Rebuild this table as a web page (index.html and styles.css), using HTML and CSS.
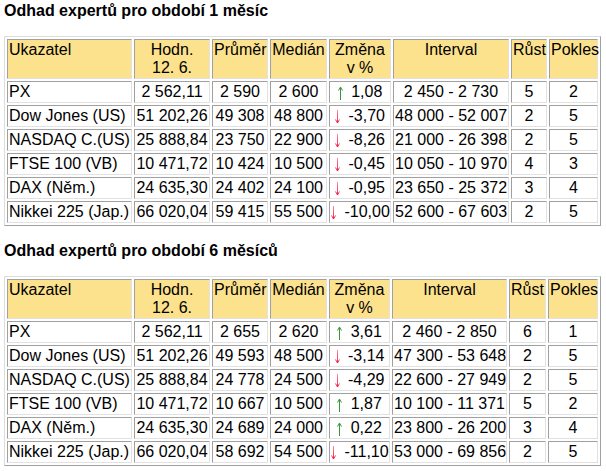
FILE: index.html
```html
<!DOCTYPE html>
<html lang="cs">
<head>
<meta charset="utf-8">
<title>Odhad expertů</title>
<link rel="stylesheet" href="styles.css">
</head>
<body>
<svg class="defs" width="0" height="0" aria-hidden="true">
  <defs>
    <symbol id="up" viewBox="0 0 9 14">
      <path d="M2.5 1.5 V14 M0.5 4.5 L2.5 1 L4.5 4.5" fill="none" stroke="#3a963a" stroke-width="1"/>
    </symbol>
    <linearGradient id="redgrad" x1="0" y1="0" x2="0" y2="1">
      <stop offset="0" stop-color="#ff8aa8"/>
      <stop offset="1" stop-color="#f01e4a"/>
    </linearGradient>
    <symbol id="down" viewBox="0 0 9 14">
      <path d="M2.5 0 V12.5 M0.5 9.5 L2.5 13 L4.5 9.5" fill="none" stroke="url(#redgrad)" stroke-width="1"/>
    </symbol>
  </defs>
</svg>

<h2 class="title">Odhad expertů pro období 1 měsíc</h2>
<table class="grid">
  <tr>
    <th class="name c1">Ukazatel</th>
    <th class="c2">Hodn.<br>12. 6.</th>
    <th class="c3">Průměr</th>
    <th class="c4">Medián</th>
    <th class="c5">Změna<br>v %</th>
    <th class="c6">Interval</th>
    <th class="c7">Růst</th>
    <th class="c8">Pokles</th>
  </tr>
  <tr><td class="name">PX</td><td>2 562,11</td><td>2 590</td><td>2 600</td><td><svg class="arrow"><use href="#up"/></svg> 1,08</td><td>2 450 - 2 730</td><td>5</td><td>2</td></tr>
  <tr><td class="name">Dow Jones (US)</td><td>51 202,26</td><td>49 308</td><td>48 800</td><td><svg class="arrow"><use href="#down"/></svg> -3,70</td><td>48 000 - 52 007</td><td>2</td><td>5</td></tr>
  <tr><td class="name">NASDAQ C.(US)</td><td>25 888,84</td><td>23 750</td><td>22 900</td><td><svg class="arrow"><use href="#down"/></svg> -8,26</td><td>21 000 - 26 398</td><td>2</td><td>5</td></tr>
  <tr><td class="name">FTSE 100 (VB)</td><td>10 471,72</td><td>10 424</td><td>10 500</td><td><svg class="arrow"><use href="#down"/></svg> -0,45</td><td>10 050 - 10 970</td><td>4</td><td>3</td></tr>
  <tr><td class="name">DAX (Něm.)</td><td>24 635,30</td><td>24 402</td><td>24 100</td><td><svg class="arrow"><use href="#down"/></svg> -0,95</td><td>23 650 - 25 372</td><td>3</td><td>4</td></tr>
  <tr><td class="name">Nikkei 225 (Jap.)</td><td>66 020,04</td><td>59 415</td><td>55 500</td><td><svg class="arrow"><use href="#down"/></svg> -10,00</td><td>52 600 - 67 603</td><td>2</td><td>5</td></tr>
</table>

<h2 class="title">Odhad expertů pro období 6 měsíců</h2>
<table class="grid grid-b">
  <tr>
    <th class="name c1">Ukazatel</th>
    <th class="c2">Hodn.<br>12. 6.</th>
    <th class="c3">Průměr</th>
    <th class="c4">Medián</th>
    <th class="c5">Změna<br>v %</th>
    <th class="c6">Interval</th>
    <th class="c7">Růst</th>
    <th class="c8">Pokles</th>
  </tr>
  <tr><td class="name">PX</td><td>2 562,11</td><td>2 655</td><td>2 620</td><td><svg class="arrow"><use href="#up"/></svg> 3,61</td><td>2 460 - 2 850</td><td>6</td><td>1</td></tr>
  <tr><td class="name">Dow Jones (US)</td><td>51 202,26</td><td>49 593</td><td>48 500</td><td><svg class="arrow"><use href="#down"/></svg> -3,14</td><td>47 300 - 53 648</td><td>2</td><td>5</td></tr>
  <tr><td class="name">NASDAQ C.(US)</td><td>25 888,84</td><td>24 778</td><td>24 500</td><td><svg class="arrow"><use href="#down"/></svg> -4,29</td><td>22 600 - 27 949</td><td>2</td><td>5</td></tr>
  <tr><td class="name">FTSE 100 (VB)</td><td>10 471,72</td><td>10 667</td><td>10 500</td><td><svg class="arrow"><use href="#up"/></svg> 1,87</td><td>10 100 - 11 371</td><td>5</td><td>2</td></tr>
  <tr><td class="name">DAX (Něm.)</td><td>24 635,30</td><td>24 689</td><td>24 000</td><td><svg class="arrow"><use href="#up"/></svg> 0,22</td><td>23 800 - 26 200</td><td>3</td><td>4</td></tr>
  <tr><td class="name">Nikkei 225 (Jap.)</td><td>66 020,04</td><td>58 692</td><td>54 500</td><td><svg class="arrow"><use href="#down"/></svg> -11,10</td><td>53 000 - 69 856</td><td>2</td><td>5</td></tr>
</table>
</body>
</html>
```
FILE: styles.css
```css
body {
  margin: 2px 4px 0;
  font-family: "Liberation Sans", Arial, sans-serif;
  font-size: 16px;
  color: #000;
  background: #fff;
}

.defs {
  position: absolute;
  width: 0;
  height: 0;
  overflow: hidden;
}

.title {
  margin: 0 0 16px;
  font-size: 16px;
  font-weight: bold;
  line-height: 18px;
}

.grid {
  table-layout: fixed;
  width: 597px;
  border-collapse: separate;
  border-spacing: 2px;
  border: 1px solid;
  border-color: #dcdcdc #a0a0a0 #a0a0a0 #dcdcdc;
  margin: 0 0 16px;
}

.grid th,
.grid td {
  box-sizing: border-box;
  border: 1px solid;
  border-color: #a0a0a0 #e2e2e2 #e2e2e2 #a0a0a0;
  padding: 1px;
  line-height: 18px;
  white-space: nowrap;
  text-align: center;
  font-weight: normal;
}

.grid th {
  background: #fde28e;
  vertical-align: top;
}

.grid .name {
  text-align: left;
}

.c1 { width: 125px; }
.c2 { width: 76px; }
.c3 { width: 56px; }
.c4 { width: 57px; }
.c5 { width: 62px; }
.c6 { width: 116px; }
.c7 { width: 36px; }
.c8 { width: 49px; }

.grid-b .c5 { width: 61px; }
.grid-b .c6 { width: 115px; }
.grid-b .c7 { width: 37px; }
.grid-b .c8 { width: 50px; }

.arrow {
  width: 9px;
  height: 14px;
  vertical-align: -3px;
}
```
